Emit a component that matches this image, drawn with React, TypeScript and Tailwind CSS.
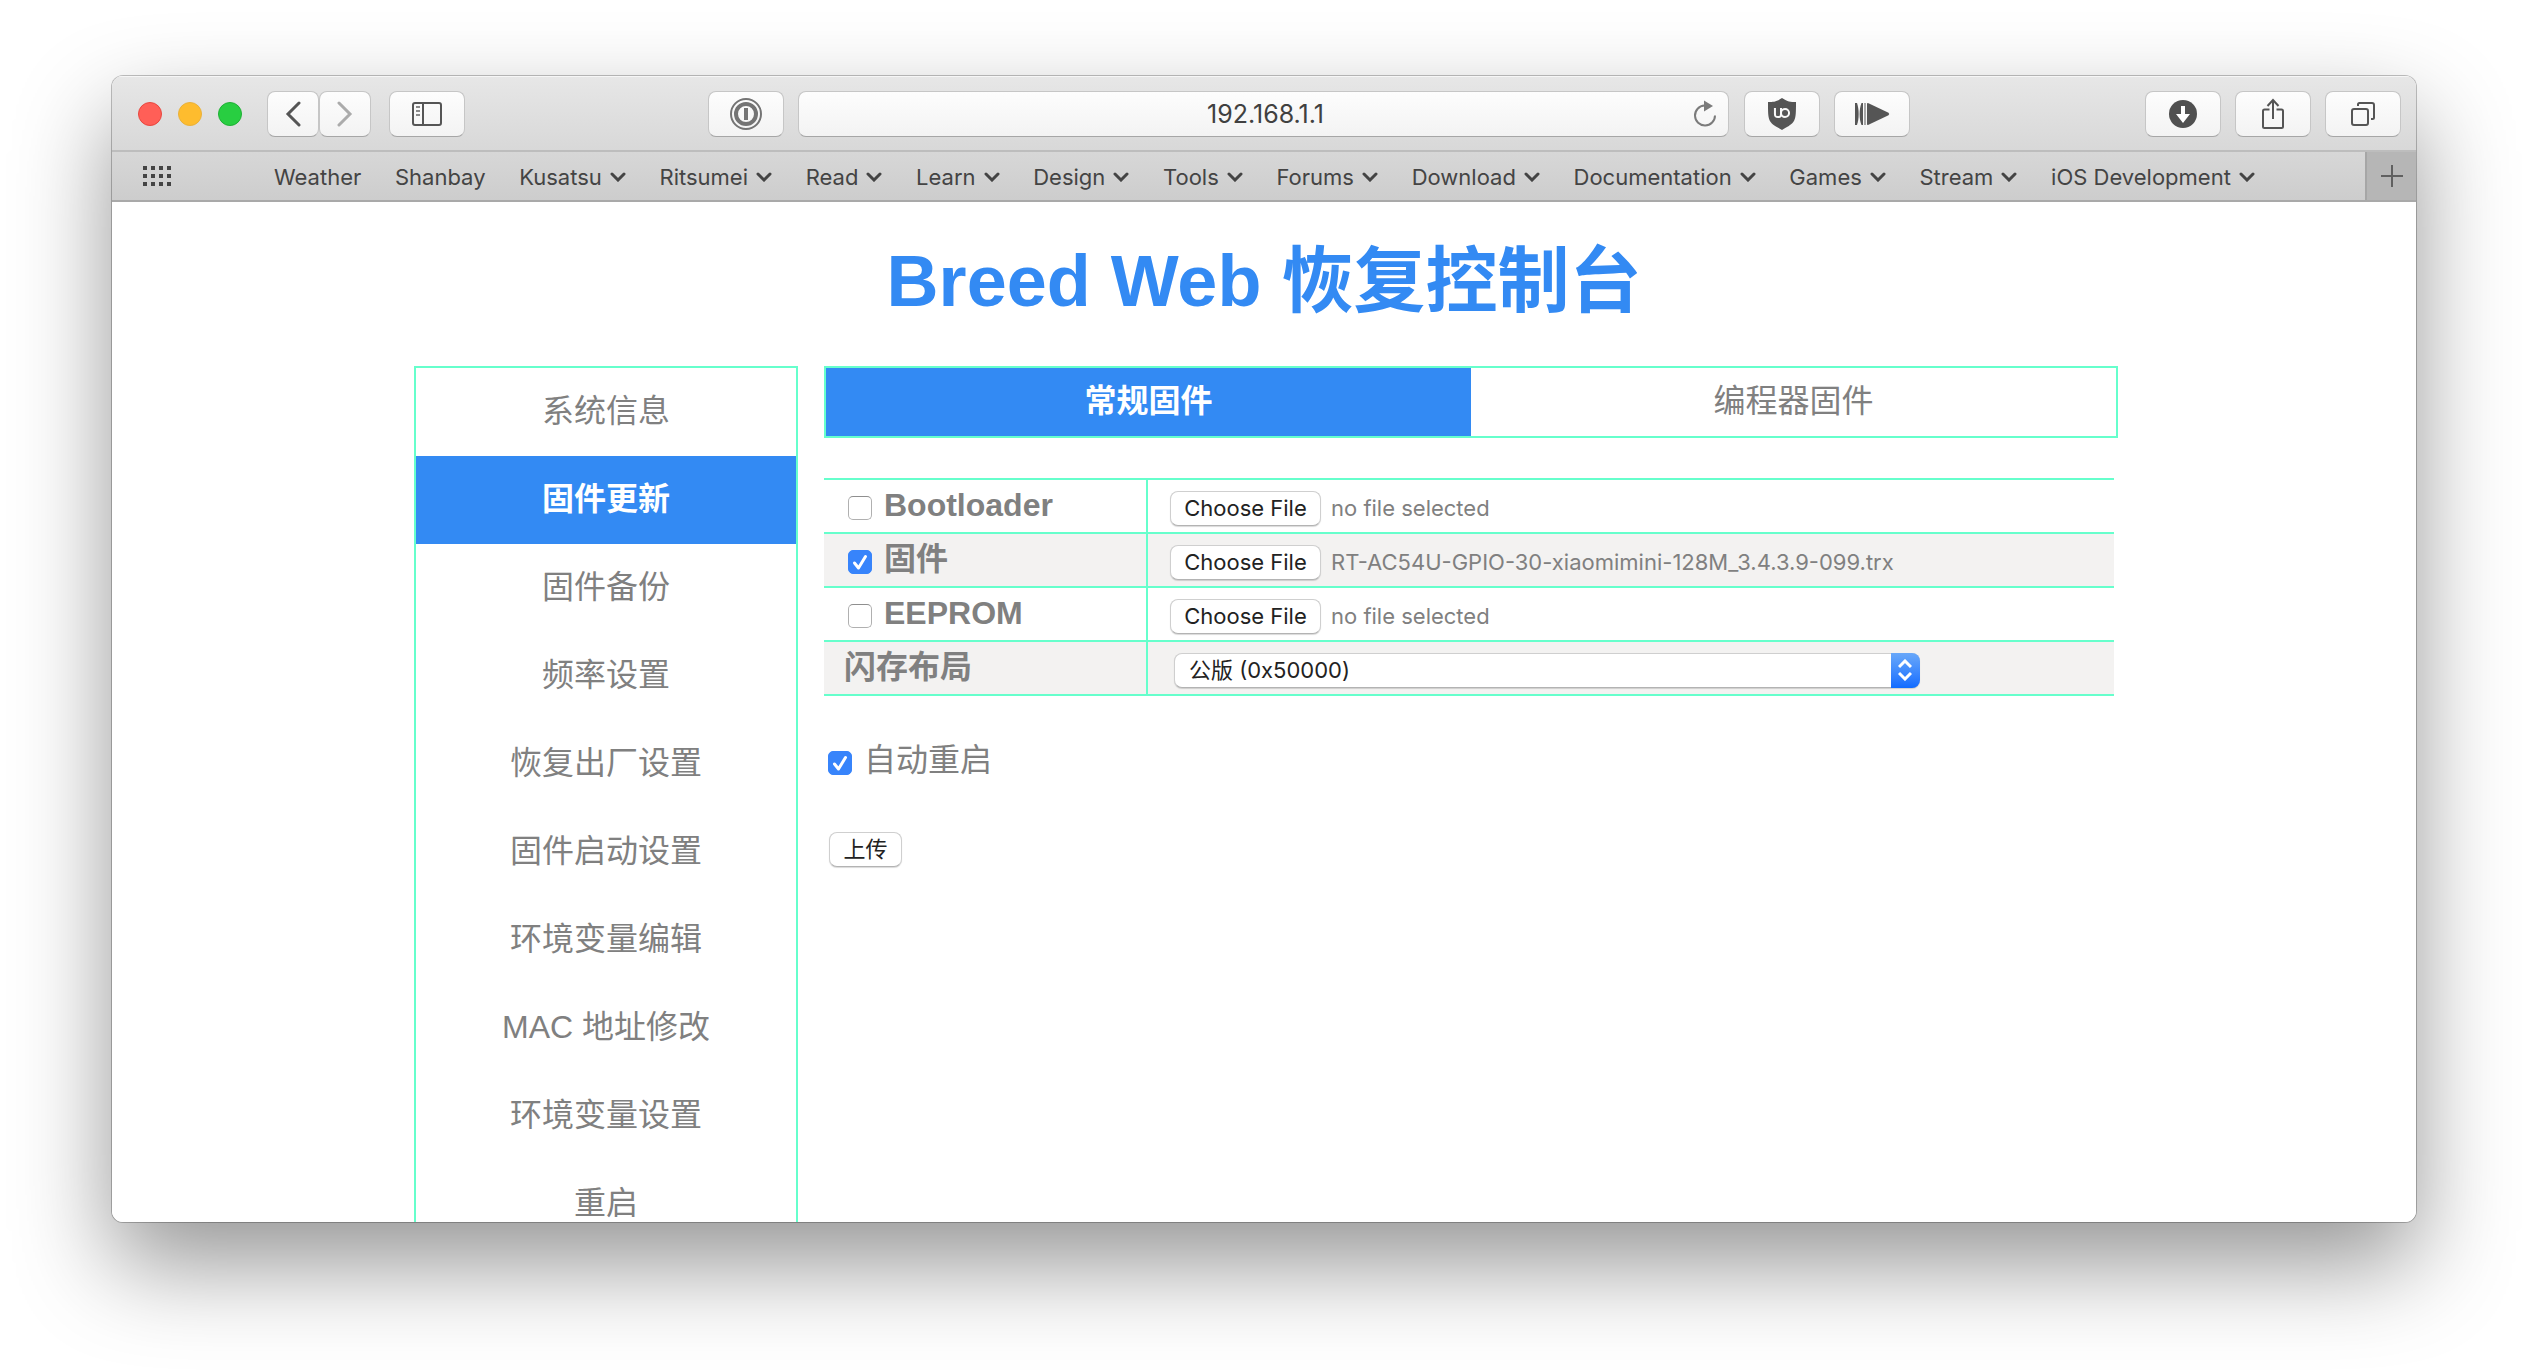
import { useState, type ChangeEvent, type ReactNode } from "react";
import { SiUblockorigin } from "react-icons/si";

const bookmarks = [
  { name: "Weather", folder: false },
  { name: "Shanbay", folder: false },
  { name: "Kusatsu", folder: true },
  { name: "Ritsumei", folder: true },
  { name: "Read", folder: true },
  { name: "Learn", folder: true },
  { name: "Design", folder: true },
  { name: "Tools", folder: true },
  { name: "Forums", folder: true },
  { name: "Download", folder: true },
  { name: "Documentation", folder: true },
  { name: "Games", folder: true },
  { name: "Stream", folder: true },
  { name: "iOS Development", folder: true },
];

const menu = [
  "系统信息",
  "固件更新",
  "固件备份",
  "频率设置",
  "恢复出厂设置",
  "固件启动设置",
  "环境变量编辑",
  "MAC 地址修改",
  "环境变量设置",
  "重启",
];

function ToolButton({ label, narrow, children }: { label: string; narrow?: boolean; children: ReactNode }) {
  return (
    <button
      type="button"
      aria-label={label}
      className={`flex h-[46px] shrink-0 items-center justify-center rounded-lg border border-[#c6c6c6] border-b-[#a6a6a6] bg-linear-to-b from-[#fdfdfd] to-[#f3f3f3] text-[#555] ${
        narrow ? "w-[52px]" : "w-[76px]"
      }`}
    >
      {children}
    </button>
  );
}

function Toolbar() {
  return (
    <header className="flex h-[76px] shrink-0 items-center border-b-2 border-[#bdbdbd] bg-linear-to-b from-[#e7e7e7] to-[#d8d8d8] pt-[2px] pr-[15px] pl-[26px] shadow-[inset_0_1px_0_#f6f6f6]">
      <div className="flex gap-4">
        <button type="button" aria-label="Close" className="size-6 rounded-full border border-[#e8473f] bg-[#ff5f57]" />
        <button type="button" aria-label="Minimize" className="size-6 rounded-full border border-[#e9b13a] bg-[#febc2e]" />
        <button type="button" aria-label="Zoom" className="size-6 rounded-full border border-[#1fb035] bg-[#28ce41]" />
      </div>
      <div className="ml-[25px] flex">
        <ToolButton label="Back" narrow>
          <svg width="16" height="26" viewBox="0 0 16 26" fill="none" stroke="currentColor" strokeWidth="3">
            <path d="M14 2 3 13l11 11" strokeLinecap="round" />
          </svg>
        </ToolButton>
        <ToolButton label="Forward" narrow>
          <svg width="16" height="26" viewBox="0 0 16 26" fill="none" stroke="#ababab" strokeWidth="3">
            <path d="m2 2 11 11L2 24" strokeLinecap="round" />
          </svg>
        </ToolButton>
      </div>
      <div className="ml-[18px]">
        <ToolButton label="Show sidebar">
          <svg width="30" height="24" viewBox="0 0 30 24" fill="none" stroke="currentColor" strokeWidth="2">
            <rect x="1" y="1" width="28" height="22" rx="2" />
            <path d="M11 1v22" />
            <path d="M4 5h4M4 9h4M4 13h4" stroke="#8a8a8a" />
          </svg>
        </ToolButton>
      </div>
      <div className="flex-[61]" />
      <ToolButton label="1Password">
        <svg width="32" height="32" viewBox="0 0 32 32" fill="none" stroke="#747474">
          <circle cx="16" cy="16" r="15" strokeWidth="2" />
          <circle cx="16" cy="16" r="10" strokeWidth="4" />
          <path d="M16 10v12" strokeWidth="4" />
        </svg>
      </ToolButton>
      <div className="relative ml-[14px] flex-[234]">
        <input
          aria-label="Address"
          defaultValue="192.168.1.1"
          className="block h-[46px] w-full rounded-lg border border-[#c6c6c6] border-b-[#a6a6a6] bg-linear-to-b from-[#fdfdfd] to-[#f3f3f3] pl-1 text-center text-[25px] text-[#404040]"
        />
        <button type="button" aria-label="Reload" className="absolute inset-y-0 right-3 flex items-center text-[#7b7b7b]">
          <svg width="24" height="28" viewBox="0 0 24 28" fill="none">
            <path d="M11.5 5.500A10 10 0 1 0 22 15.500" stroke="currentColor" strokeWidth="2" />
            <path d="M11 0.500 20 6l-9 5.500z" fill="currentColor" />
          </svg>
        </button>
      </div>
      <div className="ml-[15px] flex gap-[14px]">
        <ToolButton label="uBlock Origin">
          <SiUblockorigin size={32} />
        </ToolButton>
        <ToolButton label="Play faster">
          <svg width="36" height="24" viewBox="0 0 36 24" fill="currentColor">
            <path d="M1 1h2c2.200 6 2.200 16 0 22H1z" />
            <path d="M9 1v22H7.500C5 17 5 7 7.500 1zM10.500 1h1v22h-1z" />
            <path d="M13 2q0-1.500 1.500-.8l20 9.600q1.500 1.200 0 2.400l-20 9.600Q13 23.500 13 22z" />
          </svg>
        </ToolButton>
      </div>
      <div className="flex-[59]" />
      <div className="flex gap-[14px]">
        <ToolButton label="Downloads">
          <svg width="28" height="28" viewBox="0 0 28 28">
            <circle cx="14" cy="14" r="14" fill="#505050" />
            <path d="M12 6h4v8h5l-7 9-7-9h5z" fill="#fff" />
          </svg>
        </ToolButton>
        <ToolButton label="Share">
          <svg width="24" height="32" viewBox="0 0 24 32" fill="none" stroke="currentColor" strokeWidth="2">
            <path d="M8.500 11.500H3.500a1.500 1.500 0 0 0-1.500 1.500v15.500a1.500 1.500 0 0 0 1.500 1.500h17a1.500 1.500 0 0 0 1.500-1.500V13a1.500 1.500 0 0 0-1.500-1.500h-5" />
            <path d="M12 21V2M6.500 8 12 2l5.500 6" />
          </svg>
        </ToolButton>
        <ToolButton label="Show all tabs">
          <svg width="26" height="26" viewBox="0 0 26 26" fill="none" stroke="currentColor" strokeWidth="2">
            <rect x="2" y="8" width="16" height="16" rx="2" />
            <path d="M8 5V3.500A1.500 1.500 0 0 1 9.500 2H22a2 2 0 0 1 2 2v12.500a1.500 1.500 0 0 1-1.500 1.500H21" />
          </svg>
        </ToolButton>
      </div>
    </header>
  );
}

function BookmarksBar() {
  return (
    <div className="flex h-[50px] shrink-0 border-b-2 border-[#a9a9a9] bg-linear-to-b from-[#d7d7d7] to-[#cdcdcd] text-[#444]">
      <button type="button" aria-label="Top sites" className="ml-[30px] flex items-center">
        <svg width="30" height="20" viewBox="0 0 30 20" fill="currentColor">
          {[0, 8, 16].map((y) =>
            [1, 9, 17, 25].map((x) => <rect key={`${x}-${y}`} x={x} y={y} width="4" height="4" />),
          )}
        </svg>
      </button>
      <nav aria-label="Favorites" className="mr-[110px] ml-[102px] flex flex-1 items-center justify-between pt-[2px] text-[22px]">
        {bookmarks.map((b) => (
          <a key={b.name} href="#" className="flex items-center gap-2 whitespace-nowrap">
            {b.name}
            {b.folder && (
              <svg width="16" height="10" viewBox="0 0 16 10" fill="none" stroke="currentColor" strokeWidth="3">
                <path d="m2 2 6 6 6-6" strokeLinecap="round" />
              </svg>
            )}
          </a>
        ))}
      </nav>
      <button
        type="button"
        aria-label="New tab"
        className="flex w-[51px] items-center justify-center border-l-2 border-[#a6a6a6] bg-[#b6b6b6] text-[#606060]"
      >
        <svg width="22" height="22" viewBox="0 0 22 22" stroke="currentColor" strokeWidth="2">
          <path d="M11 0v22M0 11h22" />
        </svg>
      </button>
    </div>
  );
}

function Checkbox({ id, defaultChecked }: { id: string; defaultChecked?: boolean }) {
  return (
    <span className="relative inline-flex size-6 shrink-0">
      <input
        id={id}
        type="checkbox"
        defaultChecked={defaultChecked}
        className="peer size-6 appearance-none rounded-[5px] border border-[#b0b0b0] border-t-[#8f8f8f] bg-white checked:border-[#3784fb] checked:bg-[#3784fb]"
      />
      <svg
        viewBox="0 0 24 24"
        fill="none"
        stroke="#fff"
        strokeWidth="3"
        className="pointer-events-none absolute inset-0 hidden peer-checked:block"
      >
        <path d="m6.500 13 4 5L17.500 6.500" strokeLinecap="round" strokeLinejoin="round" />
      </svg>
    </span>
  );
}

function FilePicker({ id, label, initial }: { id: string; label: string; initial: string }) {
  const [name, setName] = useState(initial);
  const onChange = (e: ChangeEvent<HTMLInputElement>) => setName(e.target.files?.[0]?.name ?? "no file selected");
  return (
    <div className="flex items-center gap-[10px] pt-1 font-['Inter',sans-serif] text-[22px] font-normal">
      <input id={id} type="file" aria-label={label} onChange={onChange} className="sr-only" />
      <label
        htmlFor={id}
        className="flex h-[35px] w-[151px] items-center justify-center rounded-lg border border-[#cfcfcf] border-b-[#b3b3b3] bg-white text-[#222] shadow-[0_1px_1px_rgba(0,0,0,0.15)]"
      >
        Choose File
      </label>
      <span>{name}</span>
    </div>
  );
}

function Row({ heading, shaded, children }: { heading: ReactNode; shaded?: boolean; children: ReactNode }) {
  return (
    <tr className={shaded ? "bg-[#f3f2f1]" : "bg-white"}>
      <th scope="row" className="h-[54px] border-r-2 border-b-2 border-[#66ffcc] p-0 text-left">
        {heading}
      </th>
      <td className="border-b-2 border-[#66ffcc] p-0 pl-[22px]">{children}</td>
    </tr>
  );
}

function CheckHeading({ id, checked, children }: { id: string; checked?: boolean; children: ReactNode }) {
  return (
    <div className="flex items-center gap-3 pl-6">
      <span className="flex pt-1">
        <Checkbox id={id} defaultChecked={checked} />
      </span>
      <label htmlFor={id} className="pb-[2px]">{children}</label>
    </div>
  );
}

function FirmwareForm() {
  return (
    <form onSubmit={(e) => e.preventDefault()}>
      <div className="mt-10 pr-1">
        <table className="w-full table-fixed border-separate border-spacing-0 border-t-2 border-[#66ffcc] leading-10">
          <colgroup>
            <col className="w-[324px]" />
            <col />
          </colgroup>
          <tbody>
            <Row heading={<CheckHeading id="bootloader">Bootloader</CheckHeading>}>
              <FilePicker id="bootloader-file" label="Bootloader file" initial="no file selected" />
            </Row>
            <Row shaded heading={<CheckHeading id="firmware" checked>固件</CheckHeading>}>
              <FilePicker id="firmware-file" label="固件 file" initial="RT-AC54U-GPIO-30-xiaomimini-128M_3.4.3.9-099.trx" />
            </Row>
            <Row heading={<CheckHeading id="eeprom">EEPROM</CheckHeading>}>
              <FilePicker id="eeprom-file" label="EEPROM file" initial="no file selected" />
            </Row>
            <Row shaded heading={<label htmlFor="layout" className="block pb-[2px] pl-5">闪存布局</label>}>
              <div className="relative ml-1 flex w-[79%] pt-1">
                <select
                  id="layout"
                  className="h-[35px] w-full appearance-none rounded-lg border border-[#cfcfcf] border-b-[#b3b3b3] bg-white pl-[14px] font-['Inter','Noto_Sans_CJK_SC',sans-serif] text-[22px] leading-8 text-[#222] shadow-[0_1px_1px_rgba(0,0,0,0.15)]"
                >
                  <option>公版 (0x50000)</option>
                </select>
                <span className="pointer-events-none absolute right-0 bottom-0 flex h-[35px] w-[29px] items-center justify-center rounded-r-lg bg-linear-to-b from-[#69a8f9] to-[#0f6bff]">
                  <svg width="14" height="22" viewBox="0 0 14 22" fill="none" stroke="#fff" strokeWidth="3">
                    <path d="m1 8 6-6 6 6M1 14l6 6 6-6" />
                  </svg>
                </span>
              </div>
            </Row>
          </tbody>
        </table>
      </div>
      <div className="mt-11 flex items-center gap-3 pl-1 leading-10">
        <span className="flex pt-1">
          <Checkbox id="auto-reboot" defaultChecked />
        </span>
        <label htmlFor="auto-reboot" className="pb-[2px]">自动重启</label>
      </div>
      <button
        type="submit"
        className="mt-[50px] ml-[5px] flex h-[35px] w-[73px] items-center justify-center rounded-lg border border-[#cfcfcf] border-b-[#b3b3b3] bg-white text-[22px] text-[#222] shadow-[0_1px_1px_rgba(0,0,0,0.15)]"
      >
        上传
      </button>
    </form>
  );
}

export default function App() {
  const [page, setPage] = useState(1);
  const [tab, setTab] = useState(0);
  return (
    <div className="h-screen bg-white px-28 pt-[76px] pb-[148px] font-['Inter','Noto_Sans_CJK_SC',sans-serif]">
      <div className="flex h-full flex-col overflow-hidden rounded-[11px] shadow-[0_0_0_1px_rgba(0,0,0,0.24),0_42px_96px_rgba(0,0,0,0.42)]">
        <Toolbar />
        <BookmarksBar />
        <main className="min-h-0 flex-1 overflow-hidden bg-white font-['Liberation_Sans','Noto_Sans_CJK_SC',sans-serif] text-[32px] text-[#808080]">
          <h1 className="pt-[37px] text-center text-7xl leading-[84px] font-bold text-[#338af3]">Breed Web 恢复控制台</h1>
          <div className="mx-auto mt-[43px] flex max-w-[1708px] gap-[26px] pl-1">
            <nav aria-label="菜单" className="w-96 shrink-0 border-2 border-[#66ffcc]">
              {menu.map((item, i) => (
                <a
                  key={item}
                  href="#"
                  onClick={() => setPage(i)}
                  className={`flex h-[88px] items-center justify-center pb-[2px] ${i === page ? "bg-[#338af3] font-bold text-white" : ""}`}
                >
                  {item}
                </a>
              ))}
            </nav>
            <section className="flex-1">
              <div role="tablist" className="grid h-[72px] grid-cols-2 border-2 border-[#66ffcc]">
                {["常规固件", "编程器固件"].map((t, i) => (
                  <button
                    key={t}
                    type="button"
                    role="tab"
                    aria-selected={i === tab}
                    onClick={() => setTab(i)}
                    className={`pb-[2px] ${i === tab ? "bg-[#338af3] font-bold text-white" : ""}`}
                  >
                    {t}
                  </button>
                ))}
              </div>
              <FirmwareForm />
            </section>
          </div>
        </main>
      </div>
    </div>
  );
}
